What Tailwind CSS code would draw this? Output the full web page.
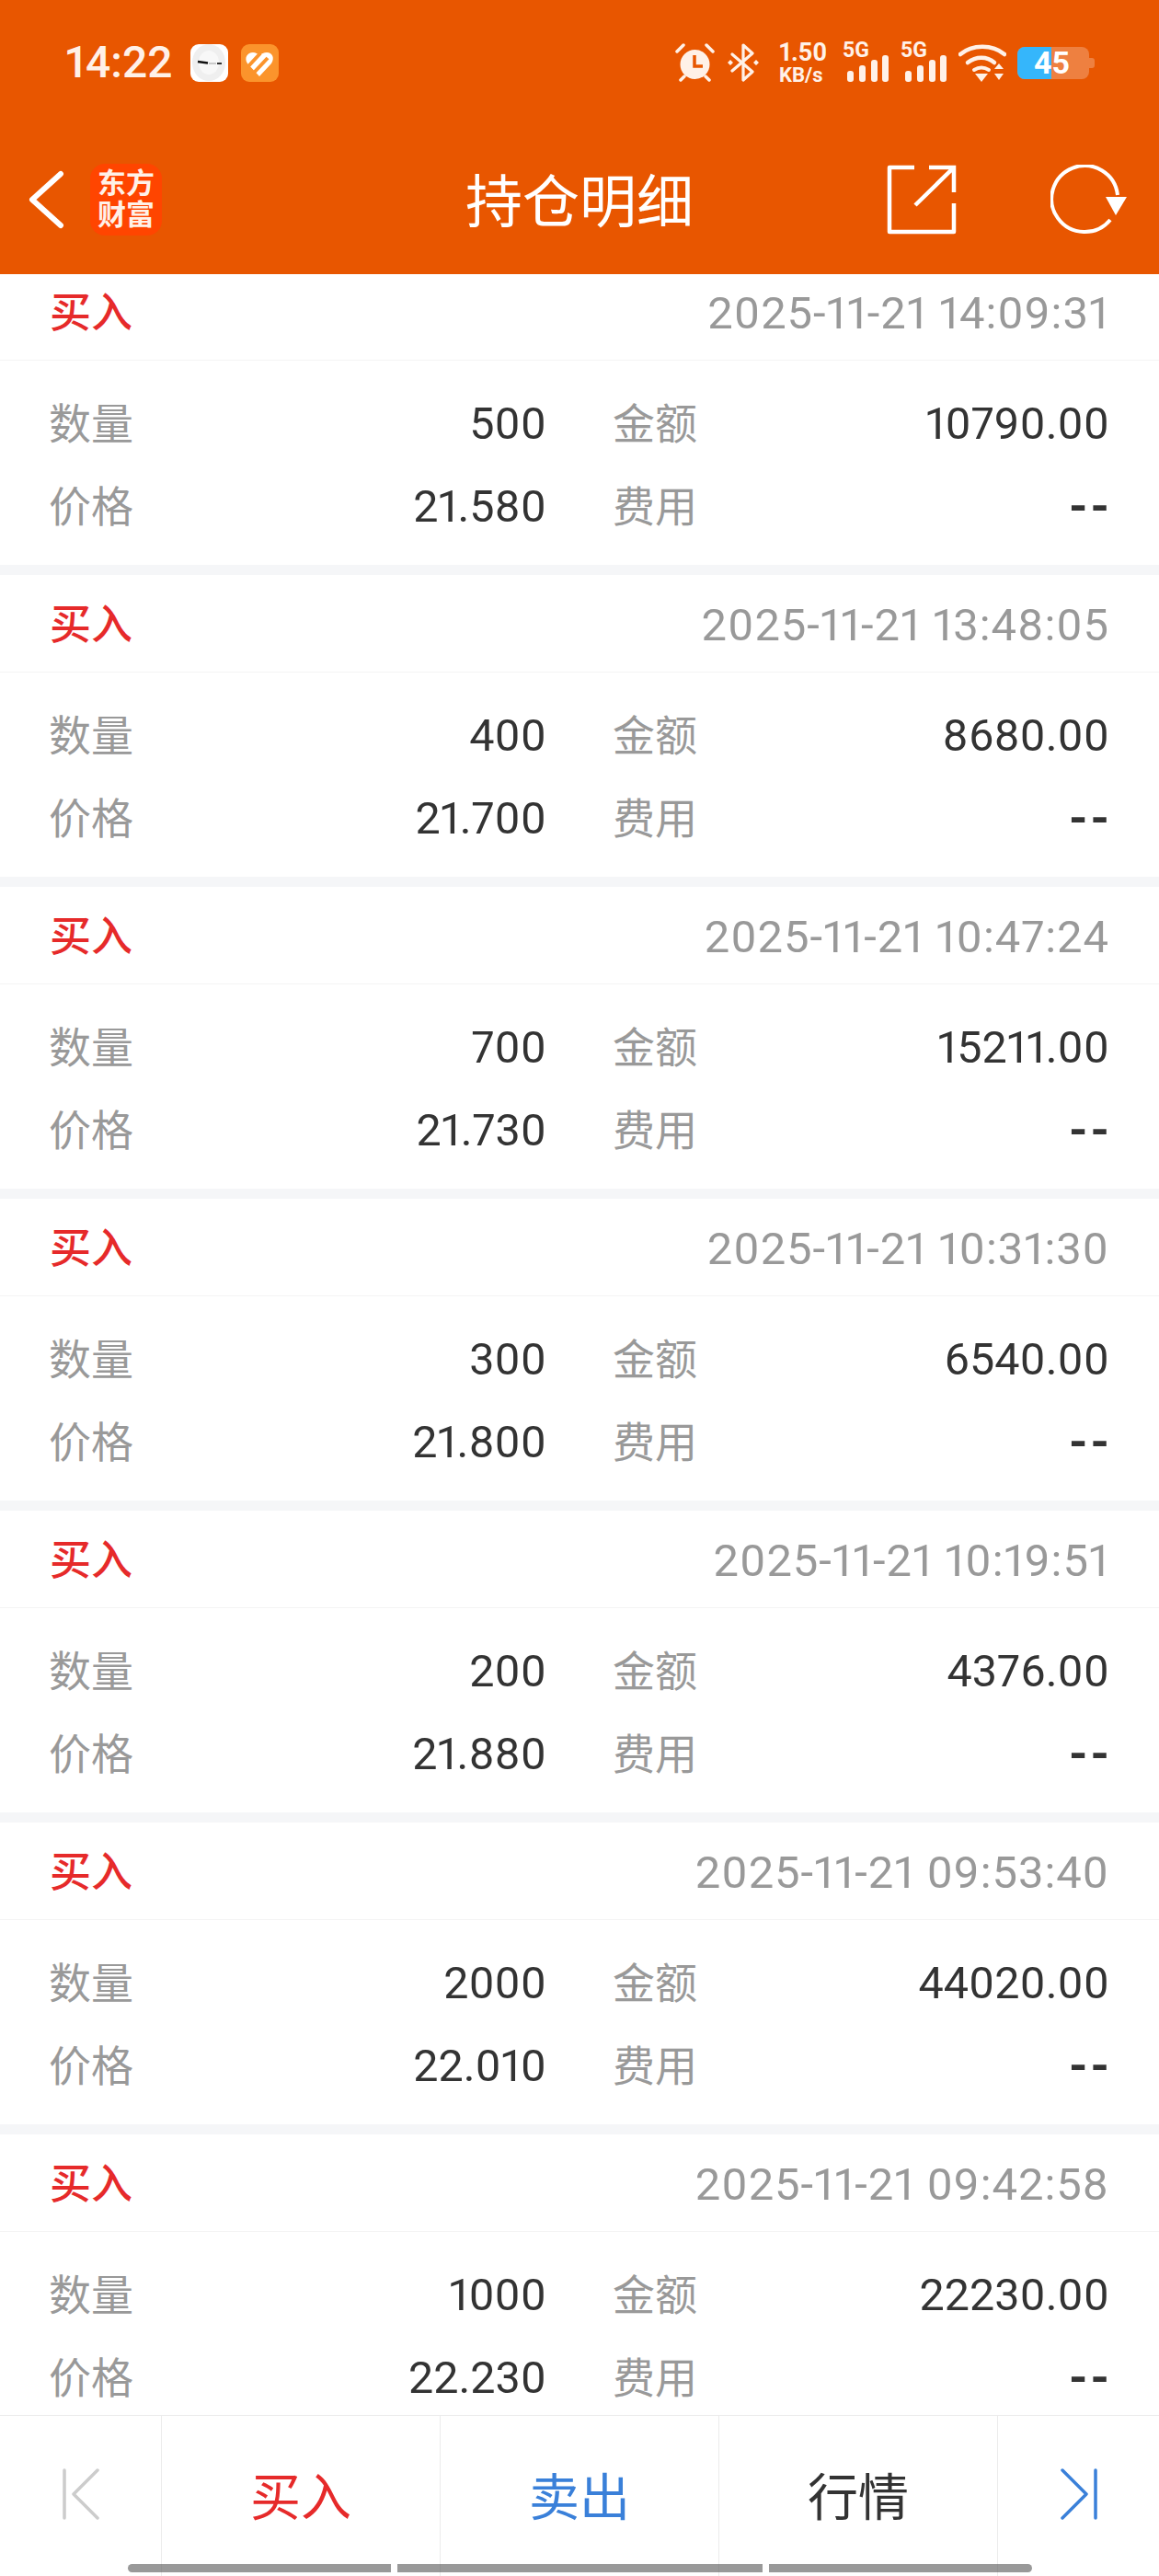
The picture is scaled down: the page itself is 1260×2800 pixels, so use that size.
<!DOCTYPE html>
<html lang="zh-CN">
<head>
<meta charset="utf-8">
<title>持仓明细</title>
<script src="https://cdn.jsdelivr.net/npm/@tailwindcss/browser@4"></script>
</head>
<body class="bg-white">
<div class="relative flex flex-col w-[1260px] h-[2800px] overflow-hidden bg-white font-['Roboto','Noto_Sans_CJK_SC',sans-serif] proportional-nums">

  <!-- orange header -->
  <header class="bg-[#e85600] h-[298px] shrink-0 text-white">
    <div class="flex items-center h-[136px] pl-[71px]">
      <span class="text-[48px] leading-none font-medium text-[#fff1e8] w-[136px]">14:22</span>
      <svg class="w-[41px] h-[41px]" viewBox="0 0 41 41">
        <rect width="41" height="41" rx="9" fill="#fff"/>
        <ellipse cx="20" cy="20" rx="18" ry="20" fill="#efefef"/>
        <ellipse cx="20" cy="20" rx="11" ry="13" fill="#f8f8f8"/>
        <path d="M8 19l11 1.5" stroke="#111" stroke-width="2.5"/>
        <path d="M20 21h8" stroke="#bbb" stroke-width="1.5"/>
        <path d="M29 21h5" stroke="#333" stroke-width="2"/>
      </svg>
      <svg class="w-[41px] h-[41px] ml-[14px]" viewBox="0 0 41 41">
        <rect width="41" height="41" rx="9" fill="#fb942c"/>
        <path d="M20 35L7 21C3 15 7 9 13 9c3 0 5 1 7 4 2-3 5-4 8-4 6 0 9 6 5 12z" fill="#fff"/>
        <path d="M8 24L21 10M14 31L29 15" stroke="#fb942c" stroke-width="4"/>
      </svg>

      <div class="ml-auto flex items-center text-[#fff1e8]">
        <svg class="w-[45px] h-[42px]" viewBox="0 0 45 42">
          <circle cx="22.500" cy="23" r="16" fill="currentColor"/>
          <path d="M3 9l7-7M42 9l-7-7M7 40l4-4M38 40l-4-4" stroke="currentColor" stroke-width="3.500" stroke-linecap="round"/>
          <path d="M22 13v12h9" fill="none" stroke="#e85600" stroke-width="3.500"/>
        </svg>
        <svg class="w-[36px] h-[42px] ml-[12px]" viewBox="0 0 36 42">
          <path d="M6 12l22 19-10 9V2l10 9L6 30" fill="none" stroke="currentColor" stroke-width="3.200" stroke-linejoin="round" stroke-linecap="round"/>
          <path d="M1 21l3-3 3 3-3 3zM29 21l3-3 3 3-3 3z" fill="currentColor"/>
        </svg>
        <div class="ml-[21px] w-[52px] flex flex-col items-start font-bold">
          <span class="text-[27px] leading-[27px]">1.50</span>
          <span class="text-[22px] leading-[22px]">KB/s</span>
        </div>
        <div class="ml-[20px] relative w-[48px] h-[42px]">
          <span class="absolute left-[-3px] top-[-2px] text-[23px] leading-[20px] font-bold">5G</span>
          <svg class="absolute inset-0" viewBox="0 0 48 42">
            <rect x="2" y="30" width="7" height="12" rx="3" fill="currentColor"/>
            <rect x="15" y="24" width="7" height="18" rx="3" fill="currentColor"/>
            <rect x="28" y="18" width="7" height="24" rx="3" fill="currentColor"/>
            <rect x="40" y="13" width="7" height="29" rx="3" fill="currentColor"/>
          </svg>
        </div>
        <div class="ml-[15px] relative w-[48px] h-[42px]">
          <span class="absolute left-[-3px] top-[-2px] text-[23px] leading-[20px] font-bold">5G</span>
          <svg class="absolute inset-0" viewBox="0 0 48 42">
            <rect x="2" y="30" width="7" height="12" rx="3" fill="currentColor"/>
            <rect x="15" y="24" width="7" height="18" rx="3" fill="currentColor"/>
            <rect x="28" y="18" width="7" height="24" rx="3" fill="currentColor"/>
            <rect x="40" y="13" width="7" height="29" rx="3" fill="currentColor"/>
          </svg>
        </div>
        <svg class="w-[52px] h-[42px] ml-[12px]" viewBox="0 0 52 42">
          <path d="M2 12C15 1 37 1 50 12" fill="none" stroke="currentColor" stroke-width="4.500" stroke-linecap="round"/>
          <path d="M10 21c9-7 21-7 29 0" fill="none" stroke="currentColor" stroke-width="4.500" stroke-linecap="round"/>
          <path d="M17 29c5-3 11-3 16 0" fill="none" stroke="currentColor" stroke-width="4" stroke-linecap="round"/>
          <path d="M18 33h14l-7 9zM39 28l5-6 5 6zM39 33h10l-5 7z" fill="currentColor"/>
        </svg>
        <div class="ml-[12px] relative w-[78px] h-[35px]">
          <div class="w-full h-full rounded-[8px] bg-white/25 overflow-hidden">
            <div class="w-[37px] h-full bg-[#35b6fb]"></div>
          </div>
          <span class="absolute left-[18px] top-0 text-[34px] leading-[35px] font-bold text-white">45</span>
        </div>
        <div class="w-[6px] h-[11px] rounded-r-[3px] bg-white/25 mr-[70px]"></div>
      </div>
    </div>

    <div class="grid grid-cols-[1fr_auto_1fr] items-center h-[162px]">
      <div class="flex items-center pl-[30px]">
        <svg class="w-[40px] h-[64px]" viewBox="0 0 40 64">
          <path d="M36 4L5 32l31 28" fill="none" stroke="#fff" stroke-width="6" stroke-linecap="round" stroke-linejoin="round"/>
        </svg>
        <div class="ml-[28px] w-[78px] h-[78px] rounded-[16px] bg-[#ff4500] flex items-center justify-center text-center text-[31px] leading-[34px] font-semibold text-[#fff1e8]">东方<br>财富</div>
      </div>
      <h1 class="text-[62px] leading-none font-normal text-white pt-[8px]">持仓明细</h1>
      <div class="flex items-center justify-end pr-[34px]">
        <svg class="w-[76px] h-[76px]" viewBox="0 0 76 76">
          <path d="M30 3H3v70h70V42" fill="none" stroke="#fff" stroke-width="4.500" stroke-linejoin="round"/>
          <path d="M46 3h27v27M73 3L31 44" fill="none" stroke="#fff" stroke-width="4.500"/>
        </svg>
        <svg class="w-[84px] h-[76px] ml-[102px]" viewBox="0 0 84 76">
          <path d="M65 60A36 36 0 1 1 73 33" fill="none" stroke="#fff" stroke-width="4"/>
          <path d="M60 35h23L71 55z" fill="#fff"/>
        </svg>
      </div>
    </div>
  </header>

  <!-- trade list, first card is scrolled under the header -->
  <main class="flex-1 min-h-0 overflow-hidden">
    <div class="mt-[-12px] flex flex-col gap-[11px] bg-[#f5f6f8] text-[45px]">

      <section class="bg-white h-[328px] shrink-0">
        <div class="flex items-center justify-between h-[106px] pt-[5px] pl-[54px] pr-[54px] border-b border-[#f4f4f4]">
          <span class="text-[#e62a2a] font-medium">买入</span>
          <span class="text-[#999999] text-[49px] tracking-[0.9px]">2025-11-21 14:09:31</span>
        </div>
        <div class="grid grid-cols-[541px_540px] gap-x-[72px] pl-[53px] pt-[24px] auto-rows-[90px] items-center text-[#333333] text-[48.500px]">
          <div class="flex items-center justify-between"><span class="text-[#999999] text-[46px]">数量</span><span>500</span></div>
          <div class="flex items-center justify-between"><span class="text-[#999999] text-[46px]">金额</span><span>10790.00</span></div>
          <div class="flex items-center justify-between"><span class="text-[#999999] text-[46px]">价格</span><span>21.580</span></div>
          <div class="flex items-center justify-between"><span class="text-[#999999] text-[46px]">费用</span><span class="font-bold text-[52px] tracking-[3px] mr-[-3px]">--</span></div>
        </div>
      </section>

      <section class="bg-white h-[328px] shrink-0">
        <div class="flex items-center justify-between h-[106px] pt-[5px] pl-[54px] pr-[54px] border-b border-[#f4f4f4]">
          <span class="text-[#e62a2a] font-medium">买入</span>
          <span class="text-[#999999] text-[49px] tracking-[0.9px]">2025-11-21 13:48:05</span>
        </div>
        <div class="grid grid-cols-[541px_540px] gap-x-[72px] pl-[53px] pt-[24px] auto-rows-[90px] items-center text-[#333333] text-[48.500px]">
          <div class="flex items-center justify-between"><span class="text-[#999999] text-[46px]">数量</span><span>400</span></div>
          <div class="flex items-center justify-between"><span class="text-[#999999] text-[46px]">金额</span><span>8680.00</span></div>
          <div class="flex items-center justify-between"><span class="text-[#999999] text-[46px]">价格</span><span>21.700</span></div>
          <div class="flex items-center justify-between"><span class="text-[#999999] text-[46px]">费用</span><span class="font-bold text-[52px] tracking-[3px] mr-[-3px]">--</span></div>
        </div>
      </section>

      <section class="bg-white h-[328px] shrink-0">
        <div class="flex items-center justify-between h-[106px] pt-[5px] pl-[54px] pr-[54px] border-b border-[#f4f4f4]">
          <span class="text-[#e62a2a] font-medium">买入</span>
          <span class="text-[#999999] text-[49px] tracking-[0.9px]">2025-11-21 10:47:24</span>
        </div>
        <div class="grid grid-cols-[541px_540px] gap-x-[72px] pl-[53px] pt-[24px] auto-rows-[90px] items-center text-[#333333] text-[48.500px]">
          <div class="flex items-center justify-between"><span class="text-[#999999] text-[46px]">数量</span><span>700</span></div>
          <div class="flex items-center justify-between"><span class="text-[#999999] text-[46px]">金额</span><span>15211.00</span></div>
          <div class="flex items-center justify-between"><span class="text-[#999999] text-[46px]">价格</span><span>21.730</span></div>
          <div class="flex items-center justify-between"><span class="text-[#999999] text-[46px]">费用</span><span class="font-bold text-[52px] tracking-[3px] mr-[-3px]">--</span></div>
        </div>
      </section>

      <section class="bg-white h-[328px] shrink-0">
        <div class="flex items-center justify-between h-[106px] pt-[5px] pl-[54px] pr-[54px] border-b border-[#f4f4f4]">
          <span class="text-[#e62a2a] font-medium">买入</span>
          <span class="text-[#999999] text-[49px] tracking-[0.9px]">2025-11-21 10:31:30</span>
        </div>
        <div class="grid grid-cols-[541px_540px] gap-x-[72px] pl-[53px] pt-[24px] auto-rows-[90px] items-center text-[#333333] text-[48.500px]">
          <div class="flex items-center justify-between"><span class="text-[#999999] text-[46px]">数量</span><span>300</span></div>
          <div class="flex items-center justify-between"><span class="text-[#999999] text-[46px]">金额</span><span>6540.00</span></div>
          <div class="flex items-center justify-between"><span class="text-[#999999] text-[46px]">价格</span><span>21.800</span></div>
          <div class="flex items-center justify-between"><span class="text-[#999999] text-[46px]">费用</span><span class="font-bold text-[52px] tracking-[3px] mr-[-3px]">--</span></div>
        </div>
      </section>

      <section class="bg-white h-[328px] shrink-0">
        <div class="flex items-center justify-between h-[106px] pt-[5px] pl-[54px] pr-[54px] border-b border-[#f4f4f4]">
          <span class="text-[#e62a2a] font-medium">买入</span>
          <span class="text-[#999999] text-[49px] tracking-[0.9px]">2025-11-21 10:19:51</span>
        </div>
        <div class="grid grid-cols-[541px_540px] gap-x-[72px] pl-[53px] pt-[24px] auto-rows-[90px] items-center text-[#333333] text-[48.500px]">
          <div class="flex items-center justify-between"><span class="text-[#999999] text-[46px]">数量</span><span>200</span></div>
          <div class="flex items-center justify-between"><span class="text-[#999999] text-[46px]">金额</span><span>4376.00</span></div>
          <div class="flex items-center justify-between"><span class="text-[#999999] text-[46px]">价格</span><span>21.880</span></div>
          <div class="flex items-center justify-between"><span class="text-[#999999] text-[46px]">费用</span><span class="font-bold text-[52px] tracking-[3px] mr-[-3px]">--</span></div>
        </div>
      </section>

      <section class="bg-white h-[328px] shrink-0">
        <div class="flex items-center justify-between h-[106px] pt-[5px] pl-[54px] pr-[54px] border-b border-[#f4f4f4]">
          <span class="text-[#e62a2a] font-medium">买入</span>
          <span class="text-[#999999] text-[49px] tracking-[0.9px]">2025-11-21 09:53:40</span>
        </div>
        <div class="grid grid-cols-[541px_540px] gap-x-[72px] pl-[53px] pt-[24px] auto-rows-[90px] items-center text-[#333333] text-[48.500px]">
          <div class="flex items-center justify-between"><span class="text-[#999999] text-[46px]">数量</span><span>2000</span></div>
          <div class="flex items-center justify-between"><span class="text-[#999999] text-[46px]">金额</span><span>44020.00</span></div>
          <div class="flex items-center justify-between"><span class="text-[#999999] text-[46px]">价格</span><span>22.010</span></div>
          <div class="flex items-center justify-between"><span class="text-[#999999] text-[46px]">费用</span><span class="font-bold text-[52px] tracking-[3px] mr-[-3px]">--</span></div>
        </div>
      </section>

      <section class="bg-white h-[328px] shrink-0">
        <div class="flex items-center justify-between h-[106px] pt-[5px] pl-[54px] pr-[54px] border-b border-[#f4f4f4]">
          <span class="text-[#e62a2a] font-medium">买入</span>
          <span class="text-[#999999] text-[49px] tracking-[0.9px]">2025-11-21 09:42:58</span>
        </div>
        <div class="grid grid-cols-[541px_540px] gap-x-[72px] pl-[53px] pt-[24px] auto-rows-[90px] items-center text-[#333333] text-[48.500px]">
          <div class="flex items-center justify-between"><span class="text-[#999999] text-[46px]">数量</span><span>1000</span></div>
          <div class="flex items-center justify-between"><span class="text-[#999999] text-[46px]">金额</span><span>22230.00</span></div>
          <div class="flex items-center justify-between"><span class="text-[#999999] text-[46px]">价格</span><span>22.230</span></div>
          <div class="flex items-center justify-between"><span class="text-[#999999] text-[46px]">费用</span><span class="font-bold text-[52px] tracking-[3px] mr-[-3px]">--</span></div>
        </div>
      </section>

    </div>
  </main>

  <!-- bottom action bar -->
  <nav class="grid grid-cols-[176px_303px_303px_303px_1fr] h-[175px] shrink-0 bg-white border-t border-[#ececec] text-[55px] leading-none">
    <div class="flex justify-center pt-[57px] border-r border-[#ececec]">
      <svg class="w-[40px] h-[56px]" viewBox="0 0 40 56">
        <path d="M2 2v52M38 2L12 28l26 26" fill="none" stroke="#cccccc" stroke-width="3.500" stroke-linecap="round" stroke-linejoin="round"/>
      </svg>
    </div>
    <div class="flex justify-center pt-[62px] border-r border-[#ececec] text-[#e62a2a]">买入</div>
    <div class="flex justify-center pt-[62px] border-r border-[#ececec] text-[#3a80d9]">卖出</div>
    <div class="flex justify-center pt-[62px] border-r border-[#ececec] text-[#333333]">行情</div>
    <div class="flex justify-center pt-[57px]">
      <svg class="w-[40px] h-[56px]" viewBox="0 0 40 56">
        <path d="M38 2v52M2 2l26 26L2 54" fill="none" stroke="#3a80d9" stroke-width="3.500" stroke-linecap="round" stroke-linejoin="round"/>
      </svg>
    </div>
  </nav>

  <!-- gesture / scroll indicator sits over the bar -->
  <div class="absolute left-[139px] top-[2787px] flex gap-[7px] h-[9px]">
    <div class="w-[286px] rounded-l-full bg-[#555]/60"></div>
    <div class="w-[397px] bg-[#555]/60"></div>
    <div class="w-[286px] rounded-r-full bg-[#555]/60"></div>
  </div>
</div>
</body>
</html>
